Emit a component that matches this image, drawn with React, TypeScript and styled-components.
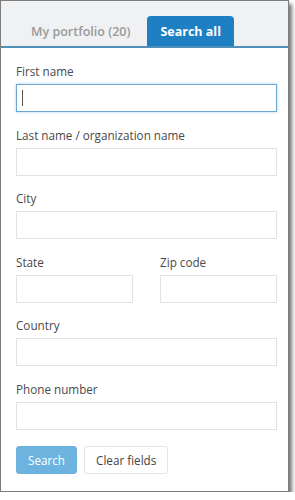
import React from 'react';
import styled, { createGlobalStyle } from 'styled-components';

const GlobalStyle = createGlobalStyle`
  html, body {
    margin: 0;
    padding: 0;
    background: #ffffff;
  }
  body {
    font-family: "Open Sans", "Liberation Sans", sans-serif;
  }
`;

const Frame = styled.div`
  width: 287px;
  height: 490px;
  border: 1px solid #7d7d7d;
  background-color: #ffffff;
  box-shadow: 3px 4px 4px rgba(0, 0, 0, 0.55);
  display: flex;
  flex-direction: column;
`;

const TabBar = styled.div`
  height: 45px;
  display: flex;
  align-items: flex-end;
  padding-left: 16px;
  gap: 3px;
  background-color: #eff1f3;
  border-bottom: 2px solid #4f8fb8;
`;

const Tab = styled.div<{ active?: boolean }>`
  height: 30px;
  padding: 0 ${p => (p.active ? '13px' : '14px')};
  display: flex;
  align-items: center;
  border-radius: 4px 4px 0 0;
  font-size: 12.5px;
  font-weight: ${p => (p.active ? 700 : 600)};
  color: ${p => (p.active ? '#ffffff' : '#9a9a9a')};
  background-color: ${p => (p.active ? '#1e7fc3' : 'transparent')};
`;

const Form = styled.div`
  padding: 15px 11px 0 15px;
  display: flex;
  flex-direction: column;
`;

const Row = styled.div`
  display: flex;
  gap: 27px;
`;

const Field = styled.div`
  flex: 1;
  display: flex;
  flex-direction: column;
  margin-bottom: 14.6px;
`;

const Label = styled.label`
  font-size: 11.7px;
  line-height: 16px;
  color: #4a4a4a;
  margin-bottom: 5px;
`;

const Input = styled.div<{ focused?: boolean }>`
  height: 26px;
  border: 1px solid ${p => (p.focused ? '#6aa7d4' : '#e2e2e2')};
  box-shadow: ${p => (p.focused ? '0 0 3px rgba(80, 150, 210, 0.45)' : 'none')};
  display: flex;
  align-items: center;
  padding-left: 5px;
`;

const Caret = styled.span`
  width: 1px;
  height: 16px;
  background-color: #555;
`;

const Buttons = styled.div`
  display: flex;
  gap: 7px;
  margin-top: 1px;
`;

const Button = styled.div<{ primary?: boolean }>`
  height: 28px;
  padding: 0 11px;
  box-sizing: border-box;
  display: flex;
  align-items: center;
  border-radius: 3px;
  font-size: 11.7px;
  color: ${p => (p.primary ? '#ffffff' : '#444')};
  background-color: ${p => (p.primary ? '#6db3df' : '#ffffff')};
  border: 1px solid ${p => (p.primary ? '#6db3df' : '#e4e4e4')};
`;

function App() {
  return (
    <>
      <GlobalStyle />
      <Frame>
        <TabBar>
          <Tab>My portfolio (20)</Tab>
          <Tab active>Search all</Tab>
        </TabBar>
        <Form>
          <Field>
            <Label>First name</Label>
            <Input focused><Caret /></Input>
          </Field>
          <Field>
            <Label>Last name / organization name</Label>
            <Input />
          </Field>
          <Field>
            <Label>City</Label>
            <Input />
          </Field>
          <Row>
            <Field>
              <Label>State</Label>
              <Input />
            </Field>
            <Field>
              <Label>Zip code</Label>
              <Input />
            </Field>
          </Row>
          <Field>
            <Label>Country</Label>
            <Input />
          </Field>
          <Field>
            <Label>Phone number</Label>
            <Input />
          </Field>
          <Buttons>
            <Button primary>Search</Button>
            <Button>Clear fields</Button>
          </Buttons>
        </Form>
      </Frame>
    </>
  );
}

export default App;
